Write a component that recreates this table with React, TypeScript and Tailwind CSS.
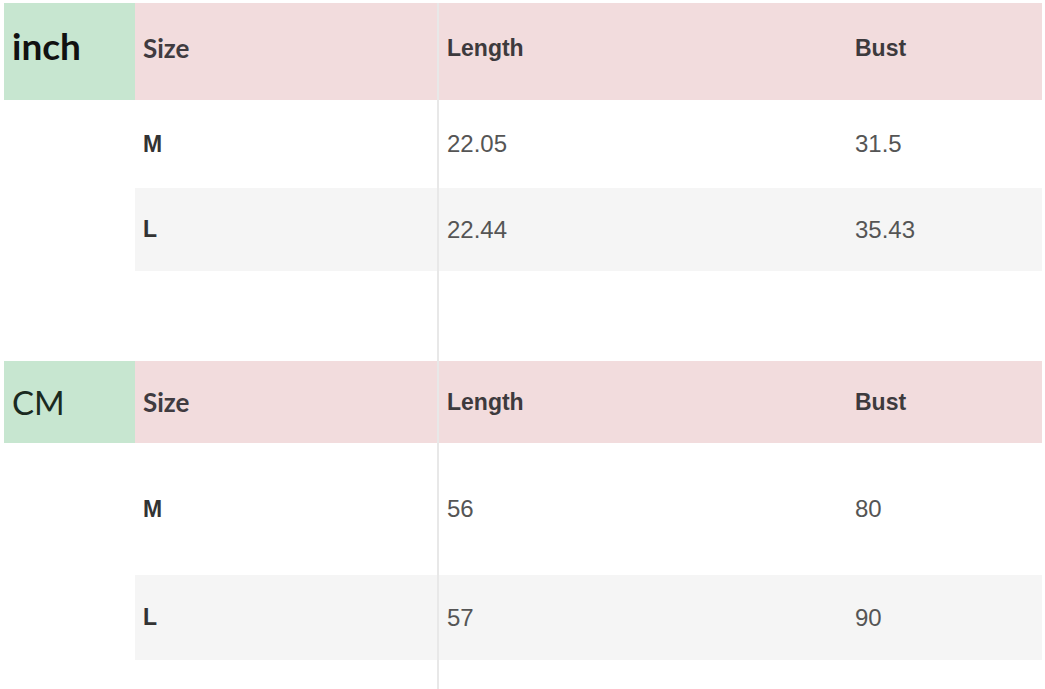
import type { ReactNode } from "react";

// ---- Size chart ---------------------------------------------------------

const labelFont = { fontFamily: "Lato, 'Open Sans', sans-serif" };
const cellFont = { fontFamily: "'Liberation Sans', Arial, sans-serif" };

function Divider() {
  return <div className="w-[2px] shrink-0 self-stretch bg-[#e8e8e8]" />;
}

function Row({
  label,
  cells,
  head,
  shade,
  height,
  lift,
}: {
  label?: ReactNode;
  cells: [string, string, string];
  head?: boolean;
  shade?: boolean;
  height: string;
  lift?: boolean;
}) {
  const bg = head ? "bg-[#f2dcdd]" : shade ? "bg-[#f5f5f5]" : "bg-white";
  const pad = lift ? "pb-[6px]" : "";
  return (
    <div className={`flex ${height}`}>
      <div className="flex w-[135px] shrink-0 pl-[4px]">
        {label && (
          <div className="flex flex-1 items-center bg-[#c7e6d0] pl-[8px] text-[#111]">{label}</div>
        )}
      </div>
      <div className={`flex flex-1 ${bg}`}>
        <div className={`flex w-[302px] shrink-0 items-center pl-[8px] ${pad}`}>
          {head ? (
            <span className="text-[26px] font-bold text-[#403b40]" style={labelFont}>
              {cells[0]}
            </span>
          ) : (
            <span className="text-[23px] font-bold text-[#333]" style={cellFont}>
              {cells[0]}
            </span>
          )}
        </div>
        <Divider />
        <div className={`flex w-[408px] shrink-0 items-center pl-[8px] ${pad}`}>
          <span
            className={head ? "text-[23px] font-bold text-[#3d3a3d]" : "text-[24px] text-[#555]"}
            style={cellFont}
          >
            {cells[1]}
          </span>
        </div>
        <div className={`flex flex-1 items-center pl-[8px] ${pad}`}>
          <span
            className={head ? "text-[23px] font-bold text-[#3d3a3d]" : "text-[24px] text-[#555]"}
            style={cellFont}
          >
            {cells[2]}
          </span>
        </div>
      </div>
    </div>
  );
}

function Spacer({ height }: { height: string }) {
  return (
    <div className={`flex ${height}`}>
      <div className="w-[437px] shrink-0" />
      <Divider />
      <div className="flex-1" />
    </div>
  );
}

export default function App() {
  return (
    <div className="flex h-[689px] w-[1045px] flex-col overflow-hidden bg-white pr-[3px] pt-[3px]">
      <Row
        head
        lift
        height="h-[97px]"
        cells={["Size", "Length", "Bust"]}
        label={
          <span className="pb-[12px] text-[37px] font-bold leading-none" style={labelFont}>
            inch
          </span>
        }
      />
      <Row height="h-[88px]" cells={["M", "22.05", "31.5"]} />
      <Row shade height="h-[83px]" cells={["L", "22.44", "35.43"]} />
      <Spacer height="h-[90px]" />
      <Row
        head
        height="h-[82px]"
        cells={["Size", "Length", "Bust"]}
        label={
          <span className="text-[33px] leading-none text-[#1a2a1f]" style={labelFont}>
            CM
          </span>
        }
      />
      <Row height="h-[132px]" cells={["M", "56", "80"]} />
      <Row shade height="h-[85px]" cells={["L", "57", "90"]} />
      <Spacer height="flex-1" />
    </div>
  );
}
